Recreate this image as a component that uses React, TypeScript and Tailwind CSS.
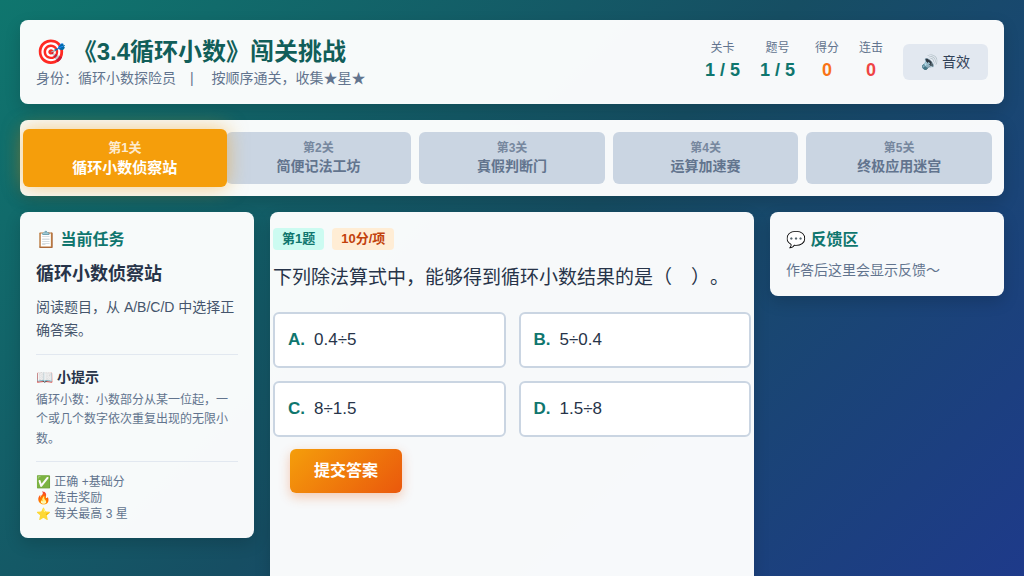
import { useState } from 'react'

const stages = ['循环小数侦察站', '简便记法工坊', '真假判断门', '运算加速赛', '终极应用迷宫']

const stats = [
  { label: '关卡', value: '1 / 5', color: 'text-[#0f766e]' },
  { label: '题号', value: '1 / 5', color: 'text-[#0f766e]' },
  { label: '得分', value: '0', color: 'text-[#f97316]' },
  { label: '连击', value: '0', color: 'text-[#ef4444]' },
]

const options = [
  { key: 'A', text: '0.4÷5' },
  { key: 'B', text: '5÷0.4' },
  { key: 'C', text: '8÷1.5' },
  { key: 'D', text: '1.5÷8' },
]

const card = 'bg-white/[0.97] rounded-lg shadow-[0_6px_16px_rgba(0,0,0,0.15)]'

function Header() {
  const [sound, setSound] = useState(true)

  return (
    <header className={`${card} flex items-center justify-between p-4`}>
      <div>
        <h1 className="text-[24px] leading-8 font-bold text-[#115e59]">🎯 《3.4循环小数》闯关挑战</h1>
        <p className="text-sm leading-5 text-slate-500">
          身份：循环小数探险员{'\u3000'}|{'\u3000 '}按顺序通关，收集★星★
        </p>
      </div>
      <div className="flex items-center gap-5">
        {stats.map(s => (
          <div key={s.label} className="text-center">
            <div className="text-xs leading-4 text-slate-500">{s.label}</div>
            <div className={`text-lg leading-7 font-bold ${s.color}`}>{s.value}</div>
          </div>
        ))}
        <button
          type="button"
          onClick={() => setSound(!sound)}
          className="rounded-md bg-slate-200 px-[18px] py-2 text-sm leading-5 text-slate-700 hover:bg-slate-300"
        >
          {sound ? '🔊' : '🔇'} 音效
        </button>
      </div>
    </header>
  )
}

function StageNav() {
  return (
    <nav className={`${card} grid grid-cols-5 gap-2 p-3`}>
      {stages.map((name, i) =>
        i === 0 ? (
          <button
            key={name}
            type="button"
            className="relative z-10 -mx-[9px] -my-[3px] rounded-md bg-[#f59e0b] text-center font-bold text-white shadow-[0_0_20px_rgba(245,158,11,0.5)]"
          >
            <span className="block text-[13px] leading-5 opacity-80">第{i + 1}关</span>
            <span className="block text-[15px] leading-5">{name}</span>
          </button>
        ) : (
          <button
            key={name}
            type="button"
            disabled
            className="rounded-md bg-slate-300 py-2 text-center font-bold text-slate-500"
          >
            <span className="block text-xs leading-4 opacity-80">第{i + 1}关</span>
            <span className="block text-sm leading-5">{name}</span>
          </button>
        ),
      )}
    </nav>
  )
}

function TaskPanel() {
  return (
    <aside className={`${card} col-span-3 self-start p-4`}>
      <h2 className="mb-2 text-base leading-6 font-bold text-[#0f766e]">📋 当前任务</h2>
      <h3 className="mb-2 text-lg leading-7 font-bold text-[#273449]">{stages[0]}</h3>
      <p className="text-sm leading-relaxed text-slate-600">阅读题目，从 A/B/C/D 中选择正确答案。</p>

      <div className="mt-3 border-t border-slate-200 pt-3">
        <h4 className="mb-1 text-sm leading-5 font-bold text-[#273449]">📖 小提示</h4>
        <p className="text-xs leading-relaxed text-slate-500">
          循环小数：小数部分从某一位起，一个或几个数字依次重复出现的无限小数。
        </p>
      </div>

      <ul className="mt-3 border-t border-slate-200 pt-3 text-xs leading-4 text-slate-500">
        <li>✅ 正确 +基础分</li>
        <li>🔥 连击奖励</li>
        <li>⭐ 每关最高 3 星</li>
      </ul>
    </aside>
  )
}

function QuestionPanel() {
  const [selected, setSelected] = useState<string | null>(null)

  return (
    <main className={`${card} col-span-6 min-h-[500px] self-start px-[3px] py-4`}>
      <div className="flex gap-2 text-[13px] leading-[22px] font-bold">
        <span className="rounded bg-[#ccfbf1] px-[9px] text-[#0f766e]">第1题</span>
        <span className="rounded bg-[#ffedd5] px-[9px] text-[#c2410c]">10分/项</span>
      </div>
      <p className="mt-3 mb-[18px] text-[19px] leading-8 text-[#273449] [text-spacing-trim:space-all]">
        下列除法算式中，能够得到循环小数结果的是（{'\u3000'}）。
      </p>

      <div className="grid grid-cols-2 gap-[13px]">
        {options.map(o => (
          <button
            key={o.key}
            type="button"
            aria-pressed={selected === o.key}
            onClick={() => setSelected(o.key)}
            className={`flex items-center gap-[9px] rounded-md border-2 px-[13px] py-[14px] text-left text-[17px] leading-6 text-[#273449] ${
              selected === o.key ? 'border-teal-500 bg-teal-50' : 'border-slate-300 bg-white'
            }`}
          >
            <span className="font-bold text-[#0f766e]">{o.key}.</span>
            <span>{o.text}</span>
          </button>
        ))}
      </div>

      <button
        type="button"
        className="mt-3 ml-[17px] rounded-md bg-[linear-gradient(135deg,#f59e0b,#ea580c)] px-6 py-2.5 text-base leading-6 font-bold text-white shadow-[0_4px_12px_rgba(234,88,12,0.3)]"
      >
        提交答案
      </button>
    </main>
  )
}

function FeedbackPanel() {
  return (
    <aside className={`${card} col-span-3 self-start p-4`}>
      <h2 className="mb-2 text-base leading-6 font-bold text-[#0f766e]">💬 反馈区</h2>
      <p className="text-sm leading-5 text-slate-500">作答后这里会显示反馈～</p>
    </aside>
  )
}

export default function App() {
  return (
    <div
      lang="zh-CN"
      className="flex h-screen flex-col gap-4 overflow-hidden bg-[linear-gradient(135deg,#0f766e,#164e63,#1e3a8a)] p-5 font-['Liberation_Sans','Noto_Sans_CJK_SC',sans-serif]"
    >
      <Header />
      <StageNav />
      <div className="grid grid-cols-12 gap-4">
        <TaskPanel />
        <QuestionPanel />
        <FeedbackPanel />
      </div>
    </div>
  )
}
